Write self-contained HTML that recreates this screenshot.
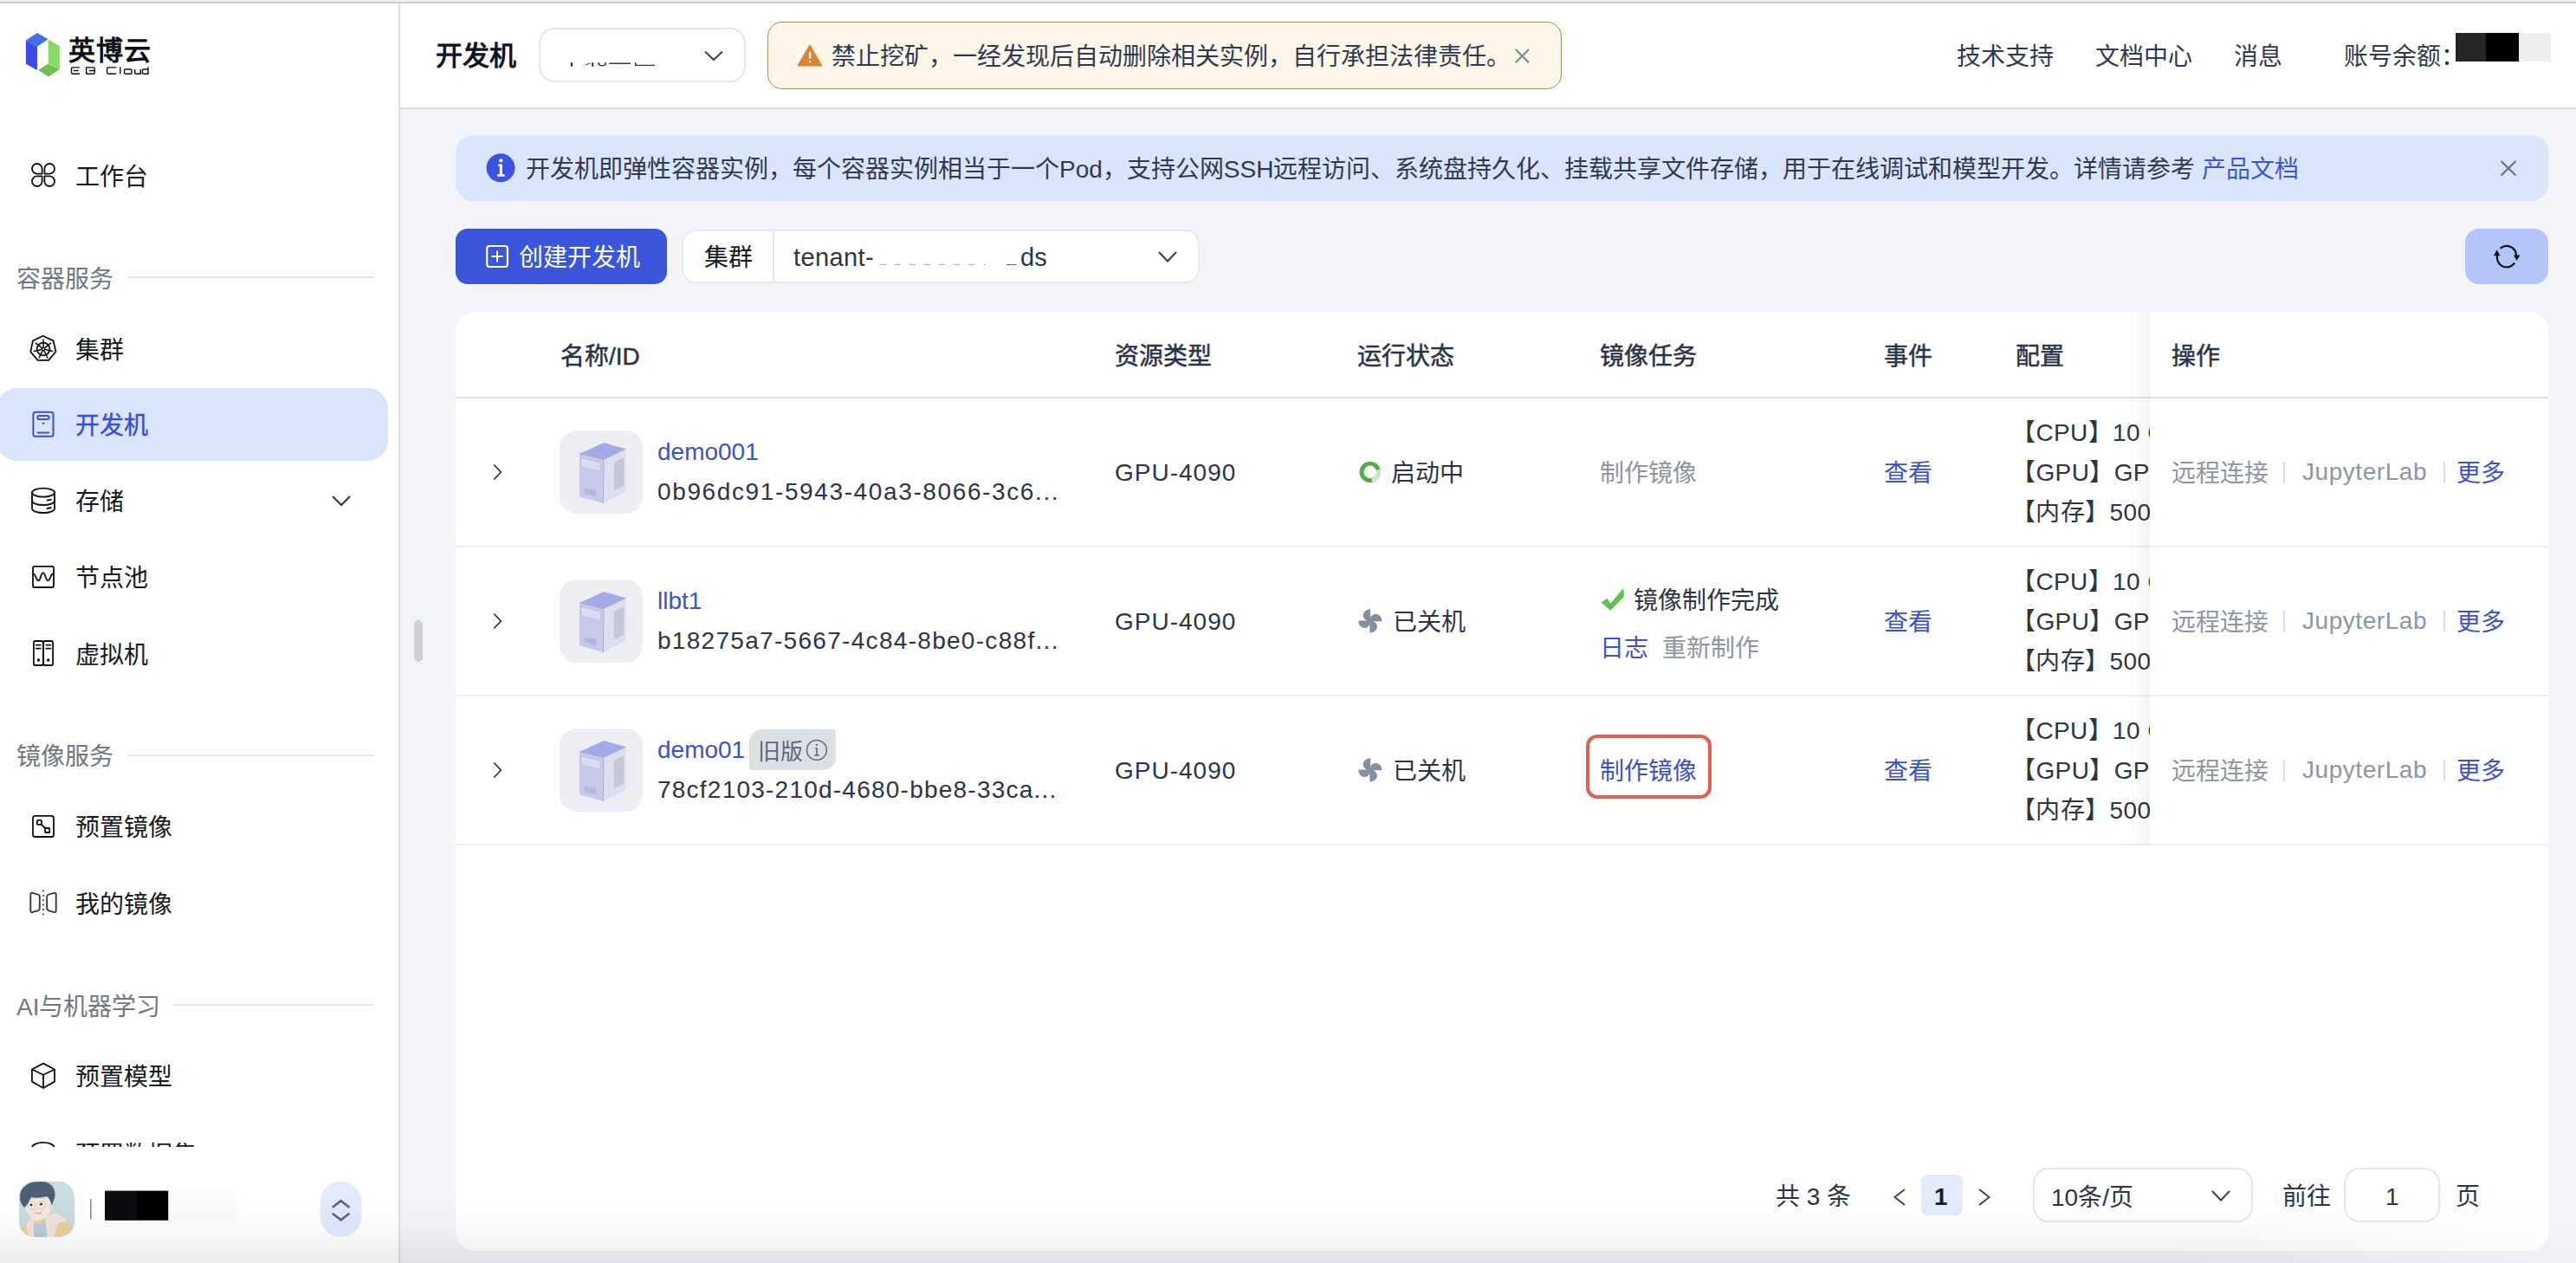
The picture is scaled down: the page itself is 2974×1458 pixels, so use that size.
<!DOCTYPE html>
<html lang="zh-CN"><head><meta charset="utf-8">
<style>
*{box-sizing:border-box;margin:0;padding:0}
html,body{width:2974px;height:1458px;overflow:hidden;background:#F3F4F8;font-family:"Liberation Sans",sans-serif;color:#2C3446}
.a{position:absolute;white-space:nowrap}
.t{position:absolute;white-space:nowrap;line-height:1;font-size:28px;margin-top:2px}
.lat{margin-top:0}
#topline{left:0;top:2px;width:2974px;height:2px;background:#C9CBCC}
#sidebar{left:0;top:4px;width:460px;height:1454px;background:#fff}
#sbborder{left:460px;top:4px;width:2px;height:1454px;background:#D9DFE4}
#header{left:462px;top:4px;width:2512px;height:120px;background:#fff}
#hdborder{left:462px;top:124px;width:2512px;height:2px;background:#DCDFE5}
.mi{color:#141922}
.sec{color:#6E7787}
.secline{position:absolute;height:2px;background:#E6E8EC}
.th{color:#2A3245;-webkit-text-stroke:0.5px #2A3245}
.hl{left:526px;width:2416px;background:#DDE1E7}
.rl{left:526px;width:2416px;height:2px;background:#E9ECF1}
.td{color:#2C3446}
.nm{color:#3D52C8}
.idt{color:#2C3446}
.gr{color:#8C95A4}
.bl{color:#3D52C8}
.cfg{line-height:46px;letter-spacing:0.4px}
.jl{letter-spacing:0.55px}
.dv{width:2px;height:24px;background:#D6DBEF}
svg{position:absolute;overflow:visible}
</style></head><body>
<div class="a" id="topline"></div>
<div class="a" id="sidebar"></div>
<div class="a" id="sbborder"></div>
<div class="a" id="header"></div>
<div class="a" id="hdborder"></div>

<!-- SIDEBAR -->
<div id="sb">
<!-- logo -->
<svg style="left:0;top:0" width="200" height="100" viewBox="0 0 200 100">
  <polygon points="43,38 29.9,46.5 43,53.8 55.6,45.3" fill="#4270E8"/>
  <polygon points="29.9,46.5 43,53.8 43,81 29.9,73.8" fill="#3A4BE8"/>
  <polygon points="55.7,45.5 68.8,53.3 68.8,80 55.7,72.9" fill="#86DB68"/>
  <polygon points="43.9,81 55.7,73.5 68.8,80 56.3,88.4" fill="#72BF50"/>
</svg>
<div class="t" style="left:79px;top:41px;font-size:31px;font-weight:bold;color:#0A0D16;letter-spacing:1px">英博云</div>
<svg style="left:0;top:0" width="200" height="100" viewBox="0 0 200 100"><g fill="none" stroke="#0A0D16" stroke-width="1.4" stroke-linejoin="round">
<path d="M92,77.9 H84 Q82.5,77.9 82.5,79.4 V83.8 Q82.5,85.2 84,85.2 H92 M84.8,81.5 H90.6"/>
<path d="M99.6,85.2 V77.9 H108 Q109.3,77.9 109.3,79.3 V83.8 Q109.3,85.2 108,85.2 H99.6 M102.8,81.5 H109.3"/>
<path d="M134.3,77.9 H125 Q123.6,77.9 123.6,79.3 V83.8 Q123.6,85.2 125,85.2 H134.3"/>
<path d="M138.8,77.2 V85.2"/>
<path d="M144.6,80 H151 Q152,80 152,81 V84.2 Q152,85.2 151,85.2 H144.6 Q143.5,85.2 143.5,84.2 V81 Q143.5,80 144.6,80 Z"/>
<path d="M155.7,80 V84 Q155.7,85.2 157,85.2 H162.3 V80"/>
<path d="M171,77.2 V85.2 H165.5 Q164.5,85.2 164.5,84.2 V81 Q164.5,80 165.5,80 H171"/>
</g></svg>

<div class="t mi" style="left:87px;top:189px">工作台</div>
<div class="t sec" style="left:19px;top:307px">容器服务</div>
<div class="secline" style="left:146px;top:319px;width:286px"></div>
<div class="t mi" style="left:87px;top:389px">集群</div>
<div class="a" style="left:-4px;top:448px;width:452px;height:84px;background:#DAE5FB;border-radius:24px"></div>
<div class="t" style="left:87px;top:476px;color:#3550D4;-webkit-text-stroke:0.4px #3550D4">开发机</div>
<div class="t mi" style="left:87px;top:564px">存储</div>
<div class="t mi" style="left:87px;top:652px">节点池</div>
<div class="t mi" style="left:87px;top:741px">虚拟机</div>
<div class="t sec" style="left:19px;top:858px">镜像服务</div>
<div class="secline" style="left:146px;top:871px;width:286px"></div>
<div class="t mi" style="left:87px;top:940px">预置镜像</div>
<div class="t mi" style="left:87px;top:1029px">我的镜像</div>
<div class="t sec" style="left:19px;top:1147px">AI与机器学习</div>
<div class="secline" style="left:200px;top:1159px;width:232px"></div>
<div class="t mi" style="left:87px;top:1228px">预置模型</div>
</div>

<!-- HEADER -->
<div class="t" style="left:503px;top:47px;font-size:31px;font-weight:bold;color:#10141E">开发机</div>
<div class="a" style="left:622px;top:32px;width:239px;height:63px;border:2px solid #E3E7ED;border-radius:18px;background:#fff"></div>
<div class="a" style="left:886px;top:25px;width:917px;height:78px;border:1.2px solid #B3865C;border-radius:17px;background:#FEF6E9"></div>
<div class="t" style="left:960px;top:50px;color:#2F3A50">禁止挖矿，一经发现后自动删除相关实例，自行承担法律责任。</div>
<div class="t" style="left:2259px;top:50px;color:#2E394D">技术支持</div>
<div class="t" style="left:2419px;top:50px;color:#2E394D">文档中心</div>
<div class="t" style="left:2579px;top:50px;color:#2E394D">消息</div>
<div class="t" style="left:2706px;top:50px;color:#2E394D">账号余额：</div>
<div class="a" style="left:2835px;top:38px;width:35px;height:33px;background:#262626"></div>
<div class="a" style="left:2870px;top:38px;width:38px;height:33px;background:#000"></div>
<div class="a" style="left:2908px;top:38px;width:37px;height:33px;background:#EEEEEE"></div>

<!-- BANNER -->
<div class="a" style="left:526px;top:156px;width:2416px;height:76px;background:#DAE5FC;border-radius:20px"></div>
<div class="t" style="left:607px;top:180px;color:#2F3A50">开发机即弹性容器实例，每个容器实例相当于一个Pod，支持公网SSH远程访问、系统盘持久化、挂载共享文件存储，用于在线调试和模型开发。详情请参考 <span style="color:#3A55D6">产品文档</span></div>

<!-- TOOLBAR -->
<div class="a" style="left:526px;top:264px;width:244px;height:64px;background:#3C55DD;border-radius:14px"></div>
<div class="t" style="left:599px;top:282px;color:#fff">创建开发机</div>
<div class="a" style="left:787px;top:265px;width:598px;height:62px;background:#fff;border:2px solid #E6E9EF;border-radius:16px"></div>
<div class="a" style="left:892px;top:267px;width:2px;height:58px;background:#E6E9EF"></div>
<div class="t" style="left:813px;top:282px;color:#121722">集群</div>
<div class="t lat" style="left:916px;top:283px;color:#2C3446;font-size:29px;letter-spacing:0.4px">tenant-</div>
<div class="t lat" style="left:1178px;top:283px;color:#2C3446;font-size:29px">ds</div>
<div class="a" style="left:2846px;top:264px;width:96px;height:64px;background:#B3C5F6;border-radius:16px"></div>

<!-- TABLE CARD -->
<div class="a" style="left:526px;top:360px;width:2416px;height:1084px;background:#fff;border-radius:22px"></div>

<!-- TABLE HEADER -->
<div class="t th" style="left:647px;top:396px">名称/ID</div>
<div class="t th" style="left:1287px;top:396px">资源类型</div>
<div class="t th" style="left:1567px;top:396px">运行状态</div>
<div class="t th" style="left:1847px;top:396px">镜像任务</div>
<div class="t th" style="left:2175px;top:396px">事件</div>
<div class="t th" style="left:2327px;top:396px">配置</div>
<div class="a hl" style="top:458px;height:2px"></div>
<div class="a rl" style="top:630px"></div>
<div class="a rl" style="top:802px"></div>
<div class="a rl" style="top:974px"></div>

<!-- ROWS -->
<div id="rows">
<!-- row 1 -->
<div class="t nm lat" style="left:759px;top:508px">demo001</div>
<div class="t idt lat" style="left:759px;top:554px;letter-spacing:1.62px">0b96dc91-5943-40a3-8066-3c6...</div>
<div class="t td lat" style="left:1287px;top:532px;letter-spacing:1px">GPU-4090</div>
<div class="t td" style="left:1606px;top:531px">启动中</div>
<div class="t gr" style="left:1847px;top:531px">制作镜像</div>
<div class="t bl" style="left:2175px;top:531px">查看</div>
<div class="t td cfg" style="left:2322px;top:474.5px">【CPU】10 C<br>【GPU】GPU<br>【内存】500G</div>
<!-- row 2 -->
<div class="t nm lat" style="left:759px;top:680px">llbt1</div>
<div class="t idt lat" style="left:759px;top:726px;letter-spacing:1.3px">b18275a7-5667-4c84-8be0-c88f...</div>
<div class="t td lat" style="left:1287px;top:704px;letter-spacing:1px">GPU-4090</div>
<div class="t td" style="left:1608px;top:703px">已关机</div>
<div class="t td" style="left:1886px;top:678px">镜像制作完成</div>
<div class="t bl" style="left:1847px;top:733px">日志</div>
<div class="t gr" style="left:1919px;top:733px">重新制作</div>
<div class="t bl" style="left:2175px;top:703px">查看</div>
<div class="t td cfg" style="left:2322px;top:646.5px">【CPU】10 C<br>【GPU】GPU<br>【内存】500G</div>
<!-- row 3 -->
<div class="t nm lat" style="left:759px;top:852px">demo01</div>
<div class="a" style="left:865px;top:842px;width:100px;height:47px;background:#DCE0E5;border-radius:15px 4px 15px 4px"></div>
<div class="t" style="left:875px;top:853px;color:#5F6879;font-size:26px">旧版</div>
<div class="t idt lat" style="left:759px;top:898px;letter-spacing:1.23px">78cf2103-210d-4680-bbe8-33ca...</div>
<div class="t td lat" style="left:1287px;top:876px;letter-spacing:1px">GPU-4090</div>
<div class="t td" style="left:1608px;top:875px">已关机</div>
<div class="a" style="left:1831px;top:848px;width:145px;height:74px;border:4px solid #E2604F;border-radius:13px"></div>
<div class="t bl" style="left:1847px;top:875px">制作镜像</div>
<div class="t bl" style="left:2175px;top:875px">查看</div>
<div class="t td cfg" style="left:2322px;top:818.5px">【CPU】10 C<br>【GPU】GPU<br>【内存】500G</div>
</div>

<!-- FIXED COLUMN -->
<div class="a" style="left:2458px;top:360px;width:24px;height:615px;background:linear-gradient(to right,rgba(0,0,0,0),rgba(0,0,0,0.045))"></div>
<div class="a" style="left:2482px;top:360px;width:460px;height:615px;background:#fff;border-top-right-radius:22px"></div>
<div class="a hl" style="left:2482px;width:460px;top:458px;height:2px"></div>
<div class="a rl" style="left:2482px;width:460px;top:630px"></div>
<div class="a rl" style="left:2482px;width:460px;top:802px"></div>
<div class="a rl" style="left:2482px;width:460px;top:974px"></div>
<div class="t th" style="left:2507px;top:396px">操作</div>
<div class="t gr" style="left:2507px;top:531px">远程连接</div>
<div class="t gr jl lat" style="left:2658px;top:531px">JupyterLab</div>
<div class="a dv" style="left:2636px;top:533px"></div>
<div class="a dv" style="left:2821px;top:533px"></div>
<div class="t bl" style="left:2836px;top:531px">更多</div>
<div class="t gr" style="left:2507px;top:703px">远程连接</div>
<div class="t gr jl lat" style="left:2658px;top:703px">JupyterLab</div>
<div class="a dv" style="left:2636px;top:705px"></div>
<div class="a dv" style="left:2821px;top:705px"></div>
<div class="t bl" style="left:2836px;top:703px">更多</div>
<div class="t gr" style="left:2507px;top:875px">远程连接</div>
<div class="t gr jl lat" style="left:2658px;top:875px">JupyterLab</div>
<div class="a dv" style="left:2636px;top:877px"></div>
<div class="a dv" style="left:2821px;top:877px"></div>
<div class="t bl" style="left:2836px;top:875px">更多</div>

<!-- PAGINATION -->
<div class="t td" style="left:2050px;top:1366px">共 3 条</div>
<div class="a" style="left:2218px;top:1356px;width:48px;height:47px;background:#E4EAFC;border-radius:8px"></div>
<div class="t" style="left:2233px;top:1366px;font-weight:bold;color:#141A26">1</div>
<div class="a" style="left:2347px;top:1348px;width:254px;height:63px;border:2px solid #E4E7ED;border-radius:18px"></div>
<div class="t td" style="left:2368px;top:1367px">10条/页</div>
<div class="t td" style="left:2635px;top:1366px">前往</div>
<div class="a" style="left:2706px;top:1348px;width:111px;height:63px;border:2px solid #E4E7ED;border-radius:18px"></div>
<div class="t td" style="left:2754px;top:1366px">1</div>
<div class="t td" style="left:2835px;top:1366px">页</div>


<svg style="left:0;top:0;z-index:10" width="2974" height="1458" viewBox="0 0 2974 1458">
<!-- sidebar icons -->
<g fill="none" stroke="#0B0E16" stroke-width="1.8" stroke-linejoin="round">
  <path d="M48.6,200.6 H42.8 A5.800000000000001,5.800000000000001 0 1 1 48.6,194.8 Z"/>
  <path d="M51.4,200.6 V194.8 A5.800000000000001,5.800000000000001 0 1 1 57.2,200.6 Z"/>
  <path d="M48.6,203.4 V209.2 A5.800000000000001,5.800000000000001 0 1 1 42.8,203.4 Z"/>
  <path d="M51.4,203.4 H57.2 A5.800000000000001,5.800000000000001 0 1 1 51.4,209.2 Z"/>
</g>
<g fill="none" stroke="#0B0E16" stroke-width="1.8" stroke-linejoin="round" stroke-linecap="round">
  <polygon points="49.6,387.8 61.6,393.4 64.4,406 56.1,415.9 43.6,415.9 35.3,406 38,393.4"/>
  <circle cx="50" cy="403" r="7.4"/>
  <g stroke-width="1.5"><line x1="50.00" y1="401.50" x2="50.00" y2="392.00"/><line x1="51.17" y1="402.06" x2="58.60" y2="396.14"/><line x1="51.46" y1="403.33" x2="60.72" y2="405.45"/><line x1="50.65" y1="404.35" x2="54.77" y2="412.91"/><line x1="49.35" y1="404.35" x2="45.23" y2="412.91"/><line x1="48.54" y1="403.33" x2="39.28" y2="405.45"/><line x1="48.83" y1="402.06" x2="41.40" y2="396.14"/></g>
  <circle cx="50" cy="403" r="1.6" fill="#fff" stroke-width="1.4"/>
</g>
<g fill="none" stroke="#3A52D0" stroke-width="2" stroke-linecap="round">
  <rect x="38.4" y="475.8" width="23.1" height="28" rx="2.6"/>
  <rect x="43.3" y="480.1" width="13.3" height="3.8" rx="1.9"/>
  <line x1="43.8" y1="499.5" x2="56.2" y2="499.5"/>
  <circle cx="50" cy="488.7" r="0.9" fill="#3A52D0" stroke-width="0.8"/>
</g>
<g fill="none" stroke="#0B0E16" stroke-width="1.8" stroke-linecap="round">
  <ellipse cx="50" cy="568.6" rx="13" ry="5"/>
  <path d="M37,568.6 V587 A13,5 0 0 0 63,587 V568.6"/>
  <path d="M37,578 A13,5 0 0 0 63,578"/>
  <line x1="54.5" y1="577.6" x2="58.8" y2="576.6"/>
  <line x1="54.5" y1="587" x2="58.8" y2="586"/>
</g>
<g fill="none" stroke="#0B0E16" stroke-width="1.8" stroke-linecap="round">
  <rect x="38" y="653.8" width="24" height="24.2" rx="2"/>
  <path d="M38.8,662.6 C41.2,662.6 41.8,670.2 44.4,670.2 C47,670.2 47.2,661.2 49.7,661.2 C52.2,661.2 52.6,670.2 55.3,670.2 C58,670.2 58.6,662.4 61.2,662.4"/>
</g>
<g fill="none" stroke="#0B0E16" stroke-width="1.8" stroke-linecap="round">
  <rect x="38.9" y="740" width="11" height="28" rx="2"/>
  <rect x="50.1" y="740" width="11" height="28" rx="2"/>
  <line x1="41.6" y1="744.6" x2="46.8" y2="744.6"/><line x1="41.6" y1="748.6" x2="46.8" y2="748.6"/>
  <line x1="53.3" y1="744.6" x2="58.4" y2="744.6"/><line x1="53.3" y1="748.6" x2="58.4" y2="748.6"/>
  <circle cx="44.4" cy="762" r="0.8" fill="#0B0E16"/><circle cx="55.7" cy="762" r="0.8" fill="#0B0E16"/>
</g>
<g fill="none" stroke="#0B0E16" stroke-width="1.8" stroke-linecap="round" stroke-linejoin="round">
  <rect x="38" y="941.8" width="24" height="24.2" rx="2.6"/>
  <rect x="42.9" y="946.8" width="5" height="5" rx="0.6"/>
  <rect x="52.1" y="956" width="5.1" height="5" rx="0.6"/>
  <line x1="47.9" y1="951.8" x2="52.1" y2="956"/>
</g>
<g fill="none" stroke="#283042" stroke-width="1.8" stroke-linejoin="round">
  <path d="M37.5,1030.8 L43.6,1032.5 Q45.8,1033.2 45.8,1035.5 V1048.3 Q45.8,1050.6 43.6,1051.3 L37.5,1053 Q35.3,1053.5 35.3,1051.2 V1032.6 Q35.3,1030.3 37.5,1030.8 Z"/>
  <path d="M62.5,1030.8 L56.4,1032.5 Q54.2,1033.2 54.2,1035.5 V1048.3 Q54.2,1050.6 56.4,1051.3 L62.5,1053 Q64.7,1053.5 64.7,1051.2 V1032.6 Q64.7,1030.3 62.5,1030.8 Z"/>
</g>
<g fill="#283042"><circle cx="50" cy="1028.5" r="1"/><circle cx="50" cy="1034" r="1"/><circle cx="50" cy="1039.3" r="1"/><circle cx="50" cy="1044.6" r="1"/><circle cx="50" cy="1050" r="1"/><circle cx="50" cy="1055.4" r="1"/></g>
<g fill="none" stroke="#0B0E16" stroke-width="1.8" stroke-linejoin="round">
  <polygon points="50,1227.6 63,1234.5 63,1248.6 50,1256 36.9,1248.6 36.9,1234.5"/>
  <polyline points="36.9,1234.5 50,1240.8 63,1234.5"/>
  <line x1="50" y1="1240.8" x2="50" y2="1256"/>
</g>
<path d="M37,1324 A13,6 0 0 1 62.7,1324" fill="none" stroke="#0B0E16" stroke-width="1.8"/>
<!-- storage chevron -->
<polyline points="384,573 394,583 404,573" fill="none" stroke="#2B3346" stroke-width="2"/>

<!-- header chevron -->
<polyline points="814,59.5 824,69 834,59.5" fill="none" stroke="#3A4252" stroke-width="2"/>
<!-- warning icon -->
<path d="M934.9,51.8 L948.4,75 Q949,76 947.8,76 L922,76 Q920.8,76 921.4,75 Z" fill="#DD8434" stroke="#DD8434" stroke-width="1" stroke-linejoin="round"/>
<rect x="933.8" y="59.8" width="2.6" height="8" rx="0.8" fill="#FDF6E9"/>
<rect x="933.8" y="70.2" width="2.6" height="2" rx="0.6" fill="#FDF6E9"/>
<g stroke="#7F8796" stroke-width="2.2"><line x1="1749.8" y1="57" x2="1765" y2="72.2"/><line x1="1765" y1="57" x2="1749.8" y2="72.2"/></g>
<!-- info icon -->
<circle cx="578" cy="193.8" r="16.5" fill="#3B53E0"/>
<circle cx="578.3" cy="185.3" r="2.1" fill="#fff"/>
<path d="M575.3,189.6 H579.9 V201.3 H582.6 V203.8 H574 V201.3 H576.8 V192 H575.3 Z" fill="#fff"/>
<g stroke="#6B7380" stroke-width="2.2"><line x1="2887.5" y1="186" x2="2904.5" y2="202.5"/><line x1="2904.5" y1="186" x2="2887.5" y2="202.5"/></g>
<!-- create btn icon -->
<rect x="562.2" y="284" width="23.7" height="24" rx="3" fill="none" stroke="#fff" stroke-width="2.2"/>
<g stroke="#fff" stroke-width="2"><line x1="567.5" y1="296" x2="580.6" y2="296"/><line x1="574" y1="289.5" x2="574" y2="302.6"/></g>
<!-- cluster chevron -->
<polyline points="1338,291 1348,301.5 1358,291" fill="none" stroke="#2F3747" stroke-width="2"/>
<!-- refresh icon -->
<g fill="none" stroke="#0E1220" stroke-width="2.3" stroke-linecap="round">
  <path d="M2887.4,286.2 A11,11 0 0 1 2905,294.5"/>
  <path d="M2902.5,304.2 A11,11 0 0 1 2883,295.5"/>
</g>
<polygon points="2882.6,288.6 2878.9,295.3 2886.5,295.3" fill="#0E1220"/>
<polygon points="2905.6,301 2901.9,294.4 2909.3,294.4" fill="#0E1220"/>

<!-- table rows icons -->
<polyline points="570.3,536.5 578.3,545 570.3,553.5" fill="none" stroke="#2C3344" stroke-width="1.8"/>
<polyline points="570.3,708.5 578.3,717 570.3,725.5" fill="none" stroke="#2C3344" stroke-width="1.8"/>
<polyline points="570.3,880.5 578.3,889 570.3,897.5" fill="none" stroke="#2C3344" stroke-width="1.8"/>
<rect x="646" y="497" width="96" height="96" rx="20" fill="#EEEDF4"/><polygon points="669.0,524.0 697.0,511.0 722.7,518.3 697.0,530.5" fill="#A3ABE6"/><polygon points="669.0,524.0 697.0,530.5 696.5,581.0 669.0,573.2" fill="#C6C9EA"/><polygon points="697.0,530.5 722.7,518.3 722.7,567.0 696.5,581.0" fill="#DCDFEE"/><polygon points="670.4,528.4 693.5,534.0 693.5,544.5 670.4,539.0" fill="#D9DBEF" stroke="#AEB2D0" stroke-width="0.6"/><polygon points="708.7,533.5 720.6,528.0 720.6,561.0 708.7,566.7" fill="#CACDDB"/><line x1="710.7" y1="533.6" x2="710.7" y2="564.8" stroke="#B7BBCC" stroke-width="0.7"/><line x1="712.7" y1="532.7" x2="712.7" y2="563.8" stroke="#B7BBCC" stroke-width="0.7"/><line x1="714.7" y1="531.8" x2="714.7" y2="562.9" stroke="#B7BBCC" stroke-width="0.7"/><line x1="716.6" y1="530.8" x2="716.6" y2="561.9" stroke="#B7BBCC" stroke-width="0.7"/><line x1="718.6" y1="529.9" x2="718.6" y2="561.0" stroke="#B7BBCC" stroke-width="0.7"/><polygon points="674.3,563.0 688.7,565.8 688.7,573.0 674.3,570.0" fill="#B9BCD8"/><line x1="676.4" y1="564.0" x2="676.4" y2="569.8" stroke="#A6AACB" stroke-width="0.6"/><line x1="678.4" y1="564.4" x2="678.4" y2="570.3" stroke="#A6AACB" stroke-width="0.6"/><line x1="680.5" y1="564.8" x2="680.5" y2="570.7" stroke="#A6AACB" stroke-width="0.6"/><line x1="682.5" y1="565.2" x2="682.5" y2="571.1" stroke="#A6AACB" stroke-width="0.6"/><line x1="684.6" y1="565.6" x2="684.6" y2="571.5" stroke="#A6AACB" stroke-width="0.6"/><line x1="686.6" y1="566.0" x2="686.6" y2="572.0" stroke="#A6AACB" stroke-width="0.6"/><polyline points="669.0,524.0 697.0,530.5 722.7,518.3" fill="none" stroke="#B79AB0" stroke-width="0.7"/><line x1="696.8" y1="530.5" x2="696.5" y2="581" stroke="#9EA3C4" stroke-width="0.8"/>
<rect x="646" y="669" width="96" height="96" rx="20" fill="#EEEDF4"/><polygon points="669.0,696.0 697.0,683.0 722.7,690.3 697.0,702.5" fill="#A3ABE6"/><polygon points="669.0,696.0 697.0,702.5 696.5,753.0 669.0,745.2" fill="#C6C9EA"/><polygon points="697.0,702.5 722.7,690.3 722.7,739.0 696.5,753.0" fill="#DCDFEE"/><polygon points="670.4,700.4 693.5,706.0 693.5,716.5 670.4,711.0" fill="#D9DBEF" stroke="#AEB2D0" stroke-width="0.6"/><polygon points="708.7,705.5 720.6,700.0 720.6,733.0 708.7,738.7" fill="#CACDDB"/><line x1="710.7" y1="705.6" x2="710.7" y2="736.8" stroke="#B7BBCC" stroke-width="0.7"/><line x1="712.7" y1="704.7" x2="712.7" y2="735.8" stroke="#B7BBCC" stroke-width="0.7"/><line x1="714.7" y1="703.8" x2="714.7" y2="734.9" stroke="#B7BBCC" stroke-width="0.7"/><line x1="716.6" y1="702.8" x2="716.6" y2="733.9" stroke="#B7BBCC" stroke-width="0.7"/><line x1="718.6" y1="701.9" x2="718.6" y2="733.0" stroke="#B7BBCC" stroke-width="0.7"/><polygon points="674.3,735.0 688.7,737.8 688.7,745.0 674.3,742.0" fill="#B9BCD8"/><line x1="676.4" y1="736.0" x2="676.4" y2="741.8" stroke="#A6AACB" stroke-width="0.6"/><line x1="678.4" y1="736.4" x2="678.4" y2="742.3" stroke="#A6AACB" stroke-width="0.6"/><line x1="680.5" y1="736.8" x2="680.5" y2="742.7" stroke="#A6AACB" stroke-width="0.6"/><line x1="682.5" y1="737.2" x2="682.5" y2="743.1" stroke="#A6AACB" stroke-width="0.6"/><line x1="684.6" y1="737.6" x2="684.6" y2="743.5" stroke="#A6AACB" stroke-width="0.6"/><line x1="686.6" y1="738.0" x2="686.6" y2="744.0" stroke="#A6AACB" stroke-width="0.6"/><polyline points="669.0,696.0 697.0,702.5 722.7,690.3" fill="none" stroke="#B79AB0" stroke-width="0.7"/><line x1="696.8" y1="702.5" x2="696.5" y2="753" stroke="#9EA3C4" stroke-width="0.8"/>
<rect x="646" y="841" width="96" height="96" rx="20" fill="#EEEDF4"/><polygon points="669.0,868.0 697.0,855.0 722.7,862.3 697.0,874.5" fill="#A3ABE6"/><polygon points="669.0,868.0 697.0,874.5 696.5,925.0 669.0,917.2" fill="#C6C9EA"/><polygon points="697.0,874.5 722.7,862.3 722.7,911.0 696.5,925.0" fill="#DCDFEE"/><polygon points="670.4,872.4 693.5,878.0 693.5,888.5 670.4,883.0" fill="#D9DBEF" stroke="#AEB2D0" stroke-width="0.6"/><polygon points="708.7,877.5 720.6,872.0 720.6,905.0 708.7,910.7" fill="#CACDDB"/><line x1="710.7" y1="877.6" x2="710.7" y2="908.8" stroke="#B7BBCC" stroke-width="0.7"/><line x1="712.7" y1="876.7" x2="712.7" y2="907.8" stroke="#B7BBCC" stroke-width="0.7"/><line x1="714.7" y1="875.8" x2="714.7" y2="906.9" stroke="#B7BBCC" stroke-width="0.7"/><line x1="716.6" y1="874.8" x2="716.6" y2="905.9" stroke="#B7BBCC" stroke-width="0.7"/><line x1="718.6" y1="873.9" x2="718.6" y2="905.0" stroke="#B7BBCC" stroke-width="0.7"/><polygon points="674.3,907.0 688.7,909.8 688.7,917.0 674.3,914.0" fill="#B9BCD8"/><line x1="676.4" y1="908.0" x2="676.4" y2="913.8" stroke="#A6AACB" stroke-width="0.6"/><line x1="678.4" y1="908.4" x2="678.4" y2="914.3" stroke="#A6AACB" stroke-width="0.6"/><line x1="680.5" y1="908.8" x2="680.5" y2="914.7" stroke="#A6AACB" stroke-width="0.6"/><line x1="682.5" y1="909.2" x2="682.5" y2="915.1" stroke="#A6AACB" stroke-width="0.6"/><line x1="684.6" y1="909.6" x2="684.6" y2="915.5" stroke="#A6AACB" stroke-width="0.6"/><line x1="686.6" y1="910.0" x2="686.6" y2="916.0" stroke="#A6AACB" stroke-width="0.6"/><polyline points="669.0,868.0 697.0,874.5 722.7,862.3" fill="none" stroke="#B79AB0" stroke-width="0.7"/><line x1="696.8" y1="874.5" x2="696.5" y2="925" stroke="#9EA3C4" stroke-width="0.8"/>
<circle cx="1581.8" cy="544.9" r="9.75" fill="none" stroke="#57A84A" stroke-width="4.9"/><path d="M1591.17,542.21 A9.75,9.75 0 0 1 1583.83,554.44" fill="none" stroke="#CFE5CB" stroke-width="5.2"/>
<g transform="translate(1581.8,716.9)" fill="#848E9E"><path transform="rotate(0)" d="M0.4,0.6 L0.4,-13.6 A8.3,6.9 0 0 0 0.4,0.6 Z"/><path transform="rotate(90)" d="M0.4,0.6 L0.4,-13.6 A8.3,6.9 0 0 0 0.4,0.6 Z"/><path transform="rotate(180)" d="M0.4,0.6 L0.4,-13.6 A8.3,6.9 0 0 0 0.4,0.6 Z"/><path transform="rotate(270)" d="M0.4,0.6 L0.4,-13.6 A8.3,6.9 0 0 0 0.4,0.6 Z"/></g>
<g transform="translate(1581.8,888.9)" fill="#848E9E"><path transform="rotate(0)" d="M0.4,0.6 L0.4,-13.6 A8.3,6.9 0 0 0 0.4,0.6 Z"/><path transform="rotate(90)" d="M0.4,0.6 L0.4,-13.6 A8.3,6.9 0 0 0 0.4,0.6 Z"/><path transform="rotate(180)" d="M0.4,0.6 L0.4,-13.6 A8.3,6.9 0 0 0 0.4,0.6 Z"/><path transform="rotate(270)" d="M0.4,0.6 L0.4,-13.6 A8.3,6.9 0 0 0 0.4,0.6 Z"/></g>
<polygon points="1848.9,695.4 1855.5,691.1 1859.3,697.3 1874,679.6 1874.8,688.5 1859.3,704.6" fill="#62BF52" stroke="#62BF52" stroke-width="0.6" stroke-linejoin="round"/>
<circle cx="942.9" cy="865.9" r="11.4" fill="none" stroke="#5D6678" stroke-width="1.5"/>
<circle cx="942.9" cy="859.9" r="1.1" fill="#5D6678"/>
<path d="M941,863.2 H943.8 V871.2 H946 V872.8 H940 V871.2 H942.2 V864.6 H941 Z" fill="#5D6678"/>

<!-- pagination -->
<polyline points="2199,1373 2187.5,1382 2199,1391" fill="none" stroke="#3A4252" stroke-width="1.9"/>
<polyline points="2285,1373 2296.5,1382 2285,1391" fill="none" stroke="#3A4252" stroke-width="1.9"/>
<polyline points="2554,1375 2564,1385.5 2574,1375" fill="none" stroke="#3A4252" stroke-width="1.9"/>

<!-- switcher -->
<rect x="369.6" y="1364" width="47.8" height="64" rx="23.9" fill="#E3EAFB"/>
<polyline points="384.5,1393.3 393.6,1386.2 402.7,1393.3" fill="none" stroke="#5A6376" stroke-width="2.5" stroke-linecap="round"/>
<polyline points="384.5,1401.2 393.6,1408.3 402.7,1401.2" fill="none" stroke="#5A6376" stroke-width="2.5" stroke-linecap="round"/>
<!-- scrollbar -->
<rect x="478" y="716" width="10" height="48" rx="5" fill="#CDD1D8"/>
</svg>


<!-- header select redacted remnants -->
<svg style="left:0;top:0;z-index:6" width="2974" height="1458" viewBox="0 0 2974 1458">
<g fill="#2D3546">
  <rect x="658.8" y="72.2" width="2.2" height="4.6"/>
  <path d="M675.6,74.5 L681.3,72.4 L681.3,73.6 L676.5,75.2 Z"/>
  <rect x="683.2" y="72.2" width="2.1" height="4.6"/>
  <path d="M690.3,72.2 h1.9 v1.2 q0,1.6 3,1.6 q3,0 3,-1.6 v-1.2 h1.7 v1.4 q0,2.8 -4.7,2.8 q-4.9,0 -4.9,-2.8 Z"/>
  <rect x="703.3" y="72.6" width="25" height="1.3" rx="0.6"/>
  <path d="M733,72.2 h1.6 v2.5 h21.4 v1.4 h-23 Z"/>
</g>
<!-- cluster select redacted -->
<g fill="#A0A7B5">
  <rect x="1015.4" y="304.8" width="7.6" height="1" /><rect x="1032.5" y="304.8" width="7.6" height="1"/>
  <rect x="1049.6" y="304.8" width="7.6" height="1"/><rect x="1066.7" y="304.8" width="7.6" height="1"/>
  <rect x="1083.8" y="304.8" width="7.6" height="1"/><rect x="1100.9" y="304.8" width="7.6" height="1"/>
  <rect x="1118" y="304.8" width="7.6" height="1"/><rect x="1135.6" y="304.8" width="2.4" height="1"/>
</g>
<rect x="1161.8" y="305" width="11.6" height="1.2" fill="#6A7282"/>
<!-- user area -->
<defs><clipPath id="avc"><rect x="22" y="1364" width="64" height="64" rx="18"/></clipPath></defs>
<g clip-path="url(#avc)"><g transform="translate(22,1364)">
  <rect width="64" height="64" fill="#C9DCE1"/>
  <path d="M0,64 L4,52 Q10,44 18,41 L30,44 L40,38 Q52,40 62,52 L64,64 Z" fill="#E8D19E"/>
  <path d="M8,50 Q12,42 20,40 L17,64 L11,64 Z" fill="#F1E4DF"/>
  <path d="M30,40 L42,36 Q50,40 55,46 L45,48 L40,64 L32,64 Z" fill="#F1E4DF"/>
  <path d="M17,46 Q24,52 31,46 L32,64 L17,64 Z" fill="#B8CDD8"/>
  <path d="M7,20 Q6,34 12,40 Q18,46 24,45 Q32,42 36,34 L38,20 Z" fill="#F6E7E1"/>
  <path d="M35,22 Q41,20 40,27 Q39,33 35,33 Z" fill="#F2DED6"/>
  <path d="M1,20 Q0,8 10,3 Q14,0 26,0 Q36,0 40,8 Q43,14 40,22 L38,28 Q36,20 32,17 Q22,20 14,18 L10,26 L6,30 Q2,26 1,20 Z" fill="#4E6074"/>
  <circle cx="14" cy="27" r="1.4" fill="#2A2F3A"/><circle cx="25.5" cy="26" r="1.5" fill="#2A2F3A"/>
  <circle cx="14.5" cy="27.5" r="4.5" fill="none" stroke="#D8B8A8" stroke-width="0.6"/>
  <circle cx="26" cy="27" r="5" fill="none" stroke="#D8B8A8" stroke-width="0.6"/>
  <path d="M19,36 Q22,38 26,36" fill="none" stroke="#9E7E78" stroke-width="0.7"/>
</g></g>
<rect x="104" y="1384.2" width="1.6" height="23.5" fill="#8A8F99"/>
<rect x="121" y="1374.6" width="37" height="34.2" fill="#0D0E12"/>
<rect x="158" y="1374.6" width="36.5" height="34.2" fill="#010103"/>
<rect x="194.5" y="1374.6" width="78" height="34.2" fill="#FBFBFB"/>
</svg>
<!-- clipped next menu item -->
<div class="a" style="left:0;top:1300px;width:460px;height:24px;overflow:hidden">
  <div class="t mi" style="left:87px;top:18px">预置数据集</div>
</div>
<!-- bottom shade -->
<div class="a" style="left:0;top:1380px;width:2974px;height:78px;z-index:20;background:linear-gradient(to bottom,rgba(0,0,0,0),rgba(0,0,0,0.025) 50%,rgba(0,0,0,0.075));-webkit-mask-image:linear-gradient(to right,#000 0,#000 2500px,rgba(0,0,0,0.2) 2974px)"></div>

</body></html>
